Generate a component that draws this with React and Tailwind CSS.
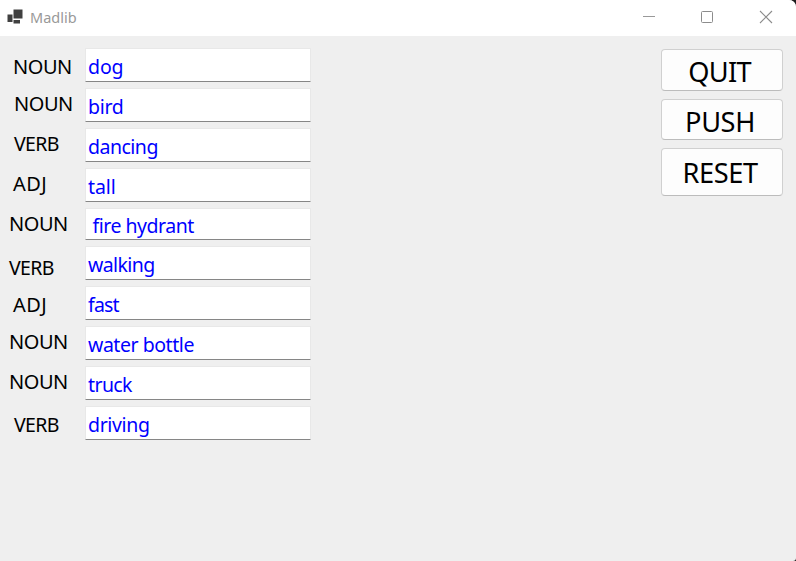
const LABEL_SPACING = {
  NOUN: "text-[20px] tracking-[-0.45px]",
  VERB: "text-[19.5px] tracking-[-0.65px]",
  ADJ: "text-[20px] tracking-[0.4px]",
};

const rows = [
  { label: "NOUN", value: "dog", row: "h-[34px] mb-[6px]", pad: "pl-[12px] pt-[7px]", field: "pt-[6px] tracking-[-0.1px]" },
  { label: "NOUN", value: "bird", row: "h-[34px] mb-[6px]", pad: "pl-[13px] pt-[4px]", field: "pt-[6px] tracking-[-0.3px]" },
  { label: "VERB", value: "dancing", row: "h-[34px] mb-[6px]", pad: "pl-[13px] pt-[4px]", field: "pt-[6px] tracking-[-0.5px]" },
  { label: "ADJ", value: "tall", row: "h-[34px] mb-[6px]", pad: "pl-[12px] pt-[4px]", field: "pt-[6px] tracking-[-0.1px]" },
  { label: "NOUN", value: " fire hydrant", row: "h-[32px] mb-[6px]", pad: "pl-[8px] pt-[4px]", field: "pt-[5px] tracking-[-0.5px]" },
  { label: "VERB", value: "walking", row: "h-[34px] mb-[6px]", pad: "pl-[8px] pt-[10px]", field: "pt-[6px] tracking-[-0.6px]" },
  { label: "ADJ", value: "fast", row: "h-[34px] mb-[6px]", pad: "pl-[12px] pt-[7px]", field: "pt-[6px] tracking-[-0.8px]" },
  { label: "NOUN", value: "water bottle", row: "h-[34px] mb-[6px]", pad: "pl-[8px] pt-[4px]", field: "pt-[6px] tracking-[-0.45px]" },
  { label: "NOUN", value: "truck", row: "h-[34px] mb-[6px]", pad: "pl-[8px] pt-[4px]", field: "pt-[6px] tracking-[-0.6px]" },
  { label: "VERB", value: "driving", row: "h-[34px]", pad: "pl-[13px] pt-[7px]", field: "pt-[6px] tracking-[-0.35px]" },
];

const buttons = [
  { text: "QUIT", box: "h-[42px] mb-[8px] pt-[4px] pr-[5px] tracking-[-0.7px]" },
  { text: "PUSH", box: "h-[41px] mb-[8px] pt-[4px] pr-[4px] tracking-[-0.4px]" },
  { text: "RESET", box: "h-[48px] pt-[6px] pr-[4px] tracking-[-0.4px]" },
];

function TitleBar() {
  return (
    <header className="flex h-9 items-start bg-white">
      <svg className="ml-[7px] mt-[8px] shrink-0" width="17" height="17" viewBox="0 0 17 17">
        <rect x="6.5" y="1.5" width="9" height="9" fill="#404040" />
        <rect x="0.5" y="6.5" width="5" height="7.5" fill="#404040" />
        <rect x="6.5" y="12" width="6.5" height="3.5" fill="#404040" />
      </svg>
      <h1 className="ml-[6px] mt-[7px] text-[14.5px] leading-5 text-[#999999]">Madlib</h1>
      <div className="ml-auto flex h-full items-start pr-[23px] pt-[10px]">
        <svg className="mr-[44px]" width="14" height="14" viewBox="0 0 14 14" fill="none" stroke="#999999">
          <path d="M1 6.5h12" />
        </svg>
        <svg className="mr-[45px]" width="14" height="14" viewBox="0 0 14 14" fill="none" stroke="#8c8c8c">
          <rect x="1.5" y="1.5" width="11" height="11" rx="1" />
        </svg>
        <svg width="14" height="14" viewBox="0 0 14 14" fill="none" stroke="#8c8c8c" strokeWidth="1.1">
          <path d="M1 1l12 12M13 1L1 13" />
        </svg>
      </div>
    </header>
  );
}

export default function App() {
  return (
    <div className="h-[561px] w-[796px] overflow-hidden bg-[#1c1c1c] font-['Noto_Sans','Open_Sans',sans-serif]">
      <div className="h-full overflow-hidden rounded-tr-[7px] rounded-br-[3px] bg-[#efefef]">
        <TitleBar />
        <main className="flex items-start justify-between pl-px pr-[13px]">
          <div className="pt-3">
            {rows.map((r, i) => (
              <div key={i} className={`flex ${r.row}`}>
                <div className={`w-[84px] shrink-0 leading-6 text-black ${LABEL_SPACING[r.label]} ${r.pad}`}>
                  <span className="block leading-6">{r.label}</span>
                </div>
                <div className={`w-[226px] whitespace-pre rounded-[1px] border border-[#e8e8e8] border-b-[#868686] bg-white pl-[2px] text-[19.5px] leading-6 text-[#0000ff] ${r.field}`}>
                  {r.value}
                </div>
              </div>
            ))}
          </div>
          <div className="w-[122px] pt-[13px]">
            {buttons.map((b) => (
              <button key={b.text} className={`flex w-full items-start justify-center rounded-[4px] border border-[#d0d0d0] border-b-[#bcbcbc] bg-[#fdfdfd] text-[27.2px] leading-9 text-black ${b.box}`}>
                {b.text}
              </button>
            ))}
          </div>
        </main>
      </div>
    </div>
  );
}
